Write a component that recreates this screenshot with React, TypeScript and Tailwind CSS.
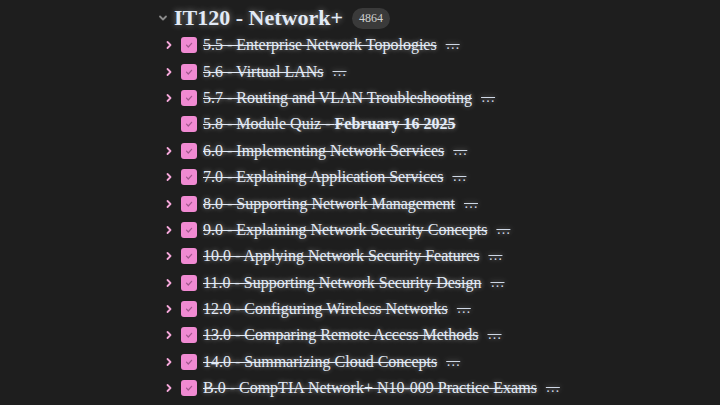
import React from "react";

const rows: { t: string; bold?: string; chev: boolean; dots: boolean }[] = [
  { t: "5.5 - Enterprise Network Topologies", chev: true, dots: true },
  { t: "5.6 - Virtual LANs", chev: true, dots: true },
  { t: "5.7 - Routing and VLAN Troubleshooting", chev: true, dots: true },
  { t: "5.8 - Module Quiz - ", bold: "February 16 2025", chev: false, dots: false },
  { t: "6.0 - Implementing Network Services", chev: true, dots: true },
  { t: "7.0 - Explaining Application Services", chev: true, dots: true },
  { t: "8.0 - Supporting Network Management", chev: true, dots: true },
  { t: "9.0 - Explaining Network Security Concepts", chev: true, dots: true },
  { t: "10.0 - Applying Network Security Features", chev: true, dots: true },
  { t: "11.0 - Supporting Network Security Design", chev: true, dots: true },
  { t: "12.0 - Configuring Wireless Networks", chev: true, dots: true },
  { t: "13.0 - Comparing Remote Access Methods", chev: true, dots: true },
  { t: "14.0 - Summarizing Cloud Concepts", chev: true, dots: true },
  { t: "B.0 - CompTIA Network+ N10-009 Practice Exams", chev: true, dots: true },
];

function Chevron({ down, color }: { down?: boolean; color: string }) {
  return (
    <svg width="10" height="10" viewBox="0 0 10 10" fill="none">
      {down ? (
        <path d="M2 3.5 L5 6.5 L8 3.5" stroke={color} strokeWidth="1.8" strokeLinecap="round" strokeLinejoin="round" />
      ) : (
        <path d="M3.5 2 L6.5 5 L3.5 8" stroke={color} strokeWidth="1.8" strokeLinecap="round" strokeLinejoin="round" />
      )}
    </svg>
  );
}

function Check() {
  return (
    <div className="w-4 h-4 rounded-[3px] bg-[#f08ad2] flex items-center justify-center shrink-0">
      <svg width="10" height="10" viewBox="0 0 10 10" fill="none">
        <path d="M2.5 5.2 L4.3 7 L7.6 3.3" stroke="#a0588c" strokeWidth="1.2" strokeLinecap="round" strokeLinejoin="round" />
      </svg>
    </div>
  );
}

export default function App() {
  return (
    <div
      className="w-[720px] h-[405px] bg-[#1e1e1e] overflow-hidden text-[#e2eaf6]"
      style={{ fontFamily: '"Liberation Serif", "Times New Roman", serif' }}
    >
      <div className="pl-[158px] pt-[4px]">
        <div className="flex items-center h-[28px]">
          <div className="w-[16px] flex items-center">
            <Chevron down color="#8a8a8a" />
          </div>
          <span className="text-[22px] font-bold leading-none [text-shadow:0_0_6px_rgba(255,255,255,0.45)]">
            IT120 - Network+
          </span>
          <span className="ml-[9px] h-[21px] px-[7px] rounded-full bg-[#3a3a3a] text-[12px] text-[#d0d0d0] flex items-center">
            4864
          </span>
        </div>
        <div className="flex flex-col">
          {rows.map((r, i) => (
            <div key={i} className="flex items-center h-[26.4px]">
              <div className="w-[23px] flex items-center pl-[6px]">
                {r.chev && <Chevron color="#f4a7d9" />}
              </div>
              <Check />
              <span className="ml-[6px] text-[16px] leading-none whitespace-nowrap line-through decoration-[#e2eaf6] [text-shadow:0_0_5px_rgba(255,255,255,0.45)]">
                {r.t}
                {r.bold && <b>{r.bold}</b>}
              </span>
              {r.dots && (
                <span className="ml-[9px] text-[14px] leading-none line-through text-[#cfd8e6] [text-shadow:0_0_5px_rgba(255,255,255,0.45)]">
                  …
                </span>
              )}
            </div>
          ))}
        </div>
      </div>
    </div>
  );
}
